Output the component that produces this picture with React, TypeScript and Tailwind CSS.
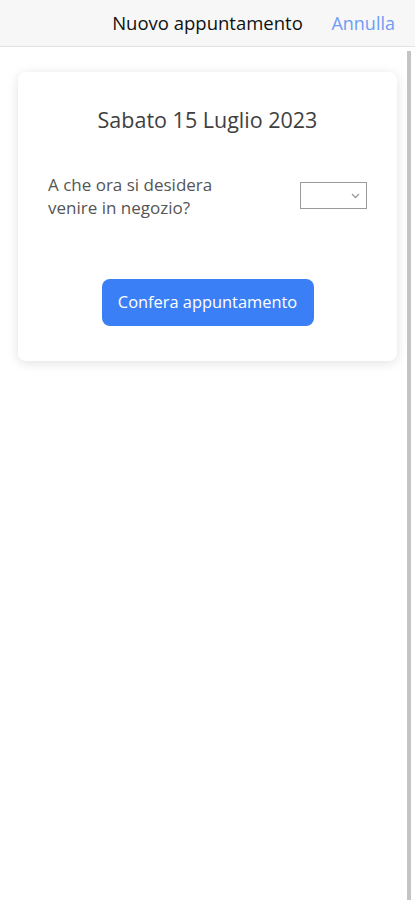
const App = () => {
  return (
    <div className="min-h-[900px] bg-white font-['Open_Sans',sans-serif]">
      <header className="relative flex h-[47px] items-center justify-center border-b border-[#e2e2e2] bg-[#f7f7f7]">
        <h1 className="text-[18.5px] text-[#111]">Nuovo appuntamento</h1>
        <button className="absolute right-[20px] top-[10px] text-[18px] text-[#6f9cf4]">
          Annulla
        </button>
      </header>

      <div className="flex">
        <main className="flex-1 pl-[18px] pr-[10px] pt-[25px]">
          <div className="rounded-lg bg-white px-[30px] pb-[35px] pt-[33px] shadow-[0_2px_12px_rgba(0,0,0,0.12)]">
            <h2 className="text-center text-[21.5px] leading-[30px] text-[#3f3f3f]">
              Sabato 15 Luglio 2023
            </h2>

            <div className="mt-[38px] flex items-start justify-between">
              <p className="w-[185px] text-[17px] leading-[23px] text-[#555]">
                A che ora si desidera venire in negozio?
              </p>
              <div className="mt-[9px] flex h-[27px] w-[67px] items-center justify-end border border-[#9a9a9a] pr-[6px]">
                <svg width="9" height="6" viewBox="0 0 9 6" fill="none">
                  <path d="M1 1l3.5 3.5L8 1" stroke="#9b9b9b" strokeWidth="1.3" />
                </svg>
              </div>
            </div>

            <div className="mt-[60px] flex justify-center">
              <button className="h-[47px] w-[212px] rounded-lg bg-[#3b7ff6] text-[16.4px] text-white">
                Confera appuntamento
              </button>
            </div>
          </div>
        </main>
        <div className="mr-[4px] mt-[4px] min-h-[849px] w-[4px] bg-[#c4c4c4]" />
      </div>
    </div>
  );
};

export default App;
